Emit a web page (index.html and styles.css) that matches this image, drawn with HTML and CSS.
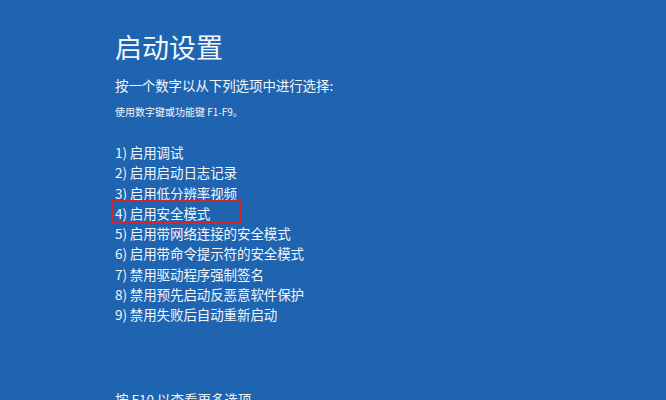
FILE: index.html
```html
<!DOCTYPE html>
<html lang="zh-CN">
<head>
<meta charset="utf-8">
<title>启动设置</title>
<link rel="stylesheet" href="styles.css">
</head>
<body>
<main class="screen">
  <h1 class="title">启动设置</h1>
  <p class="subtitle">按一个数字以从下列选项中进行选择:</p>
  <p class="note">使用数字键或功能键 F1-F9。</p>
  <ol class="options">
    <li class="option">1) 启用调试</li>
    <li class="option">2) 启用启动日志记录</li>
    <li class="option">3) 启用低分辨率视频</li>
    <li class="option option-selected">4) 启用安全模式</li>
    <li class="option">5) 启用带网络连接的安全模式</li>
    <li class="option">6) 启用带命令提示符的安全模式</li>
    <li class="option">7) 禁用驱动程序强制签名</li>
    <li class="option">8) 禁用预先启动反恶意软件保护</li>
    <li class="option">9) 禁用失败后自动重新启动</li>
  </ol>
  <p class="more">按 F10 以查看更多选项</p>
</main>
</body>
</html>
```
FILE: styles.css
```css
html, body {
  margin: 0;
  padding: 0;
  height: 100%;
  overflow: hidden;
}
body {
  background: #1f64b0;
  color: #f2f6fb;
  font-family: "Noto Sans CJK SC", "Noto Sans", sans-serif;
}
.screen {
  padding: 32px 0 0 115px;
}
.title {
  margin: 0;
  font-size: 27px;
  line-height: 30px;
  font-weight: 400;
}
.subtitle {
  margin: 13px 0 0;
  font-size: 13.5px;
  line-height: 20px;
  letter-spacing: -0.1px;
}
.note {
  margin: 10px 0 0;
  font-size: 10px;
  line-height: 14px;
}
.options {
  list-style: none;
  margin: 23px 0 0;
  padding: 0;
}
.option {
  font-size: 13.5px;
  line-height: 20.3px;
  letter-spacing: -0.1px;
}
.option-selected {
  position: relative;
}
.option-selected::after {
  content: "";
  position: absolute;
  top: -3px;
  left: -4px;
  width: 127px;
  height: 20px;
  border: 2px solid #d2232e;
}
.more {
  margin: 64px 0 0;
  font-size: 13.5px;
  line-height: 20px;
}
```
